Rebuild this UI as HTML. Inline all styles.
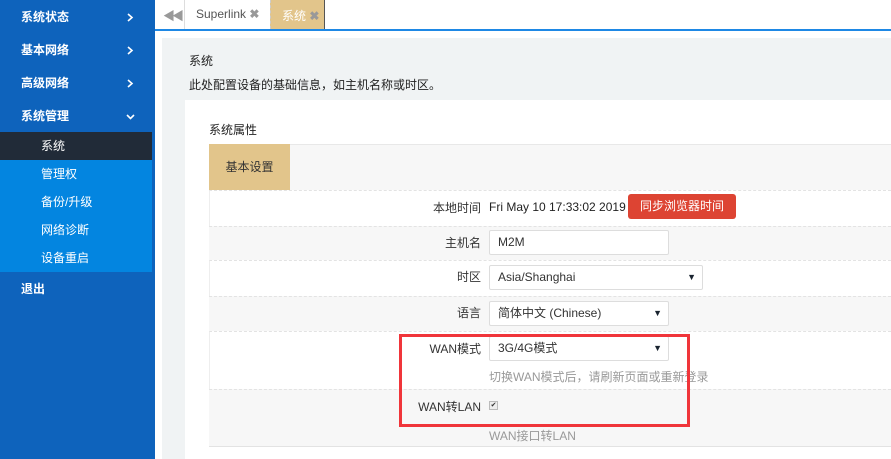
<!DOCTYPE html>
<html><head><meta charset="utf-8"><style>
*{margin:0;padding:0;box-sizing:border-box}
body{width:891px;height:459px;overflow:hidden;position:relative;font-family:"Liberation Sans","Noto Sans CJK SC",sans-serif;font-size:12px;color:#333;background:#fff}
.a{position:absolute}
.side{left:0;top:0;width:155px;height:459px;background:#0e63bc}
.m{left:21px;color:#fff;font-weight:bold;font-size:12px}
.arr{left:126px}
.sub{left:0;top:132px;width:152px;height:140px;background:#0385e0}
.si{left:0;width:152px;height:28px;line-height:28px;padding-left:41px;color:#fff;font-size:12px}
.row{left:209px;width:682px;border-top:1px dashed #e3e3e3}
.lbl{width:272px;text-align:right;font-size:12px;color:#333}
.inp{border:1px solid #ddd;border-radius:2px;background:#fff;height:25px;line-height:23px;padding-left:8px;font-size:12px;color:#333}
.tri{position:absolute;right:6px;top:0;font-size:9px;color:#1a2430}
</style></head><body>
<div class="a side"></div>
<div class="a m" style="top:8px">系统状态</div><svg class="a arr" style="top:13px" width="8" height="9"><path d="M2 1L6 4.5L2 8" stroke="#fff" stroke-width="1.6" fill="none"/></svg>
<div class="a m" style="top:41px">基本网络</div><svg class="a arr" style="top:46px" width="8" height="9"><path d="M2 1L6 4.5L2 8" stroke="#fff" stroke-width="1.6" fill="none"/></svg>
<div class="a m" style="top:74px">高级网络</div><svg class="a arr" style="top:79px" width="8" height="9"><path d="M2 1L6 4.5L2 8" stroke="#fff" stroke-width="1.6" fill="none"/></svg>
<div class="a m" style="top:107px">系统管理</div><svg class="a" style="left:126px;top:113px" width="9" height="7"><path d="M1 2L4.5 5.5L8 2" stroke="#fff" stroke-width="1.6" fill="none"/></svg>
<div class="a sub"></div>
<div class="a si" style="top:132px;background:#212b38">系统</div>
<div class="a si" style="top:160px">管理权</div>
<div class="a si" style="top:188px">备份/升级</div>
<div class="a si" style="top:216px">网络诊断</div>
<div class="a si" style="top:244px">设备重启</div>
<div class="a m" style="top:280px">退出</div>

<!-- tabs -->
<div class="a" style="left:155px;top:0;width:736px;height:29px;background:#fff"></div>
<div class="a" style="left:155px;top:29px;width:736px;height:2px;background:#1e88e5"></div>
<div class="a" style="left:163px;top:7px;color:#999;font-size:12px;letter-spacing:-3px">◀◀</div>
<div class="a" style="left:184px;top:0;width:1px;height:29px;background:#ddd"></div>
<div class="a" style="left:196px;top:7px;color:#555;font-size:12px">Superlink <span style="color:#999;font-weight:bold">✖</span></div>
<div class="a" style="left:270px;top:0;width:55px;height:29px;background:#e2c58b;border-left:1px dashed #ccc;border-right:1px solid #555"></div>
<div class="a" style="left:282px;top:7px;color:#fff;font-size:12px">系统 <span style="color:#999;font-weight:bold">✖</span></div>

<!-- content -->
<div class="a" style="left:162px;top:38px;width:729px;height:421px;background:#f0f3f4"></div>
<div class="a" style="left:189px;top:52px;font-size:12px;color:#222">系统</div>
<div class="a" style="left:189px;top:76px;font-size:12px;color:#222">此处配置设备的基础信息，如主机名称或时区。</div>
<div class="a" style="left:185px;top:100px;width:706px;height:359px;background:#fff"></div>
<div class="a" style="left:209px;top:121px;font-size:12px;color:#222">系统属性</div>
<div class="a" style="left:209px;top:144px;width:682px;height:46px;background:#f7f7f7;border-top:1px solid #e8e8e8"></div>
<div class="a" style="left:209px;top:144px;width:81px;height:46px;background:#e2c58b;line-height:46px;text-align:center;color:#333">基本设置</div>

<div class="a row" style="top:190px;height:36px;background:#fff;border-left:1px solid #eee"></div>
<div class="a row" style="top:226px;height:34px;background:#f7f7f7"></div>
<div class="a row" style="top:260px;height:36px;background:#fff;border-left:1px solid #eee"></div>
<div class="a row" style="top:296px;height:35px;background:#f7f7f7"></div>
<div class="a row" style="top:331px;height:58px;background:#fff;border-left:1px solid #eee"></div>
<div class="a row" style="top:389px;height:58px;background:#f7f7f7;border-bottom:1px solid #e3e3e3"></div>

<div class="a lbl" style="left:209px;top:199px">本地时间</div>
<div class="a" style="left:489px;top:200px;color:#222">Fri May 10 17:33:02 2019</div>
<div class="a" style="left:628px;top:194px;width:108px;height:25px;background:#dd4433;border-radius:3px;color:#fff;text-align:center;line-height:25px;font-size:12px">同步浏览器时间</div>

<div class="a lbl" style="left:209px;top:234px">主机名</div>
<div class="a inp" style="left:489px;top:230px;width:180px">M2M</div>

<div class="a lbl" style="left:209px;top:268px">时区</div>
<div class="a inp" style="left:489px;top:265px;width:214px">Asia/Shanghai<span class="tri">▼</span></div>

<div class="a lbl" style="left:209px;top:304px">语言</div>
<div class="a inp" style="left:489px;top:301px;width:180px">简体中文 (Chinese)<span class="tri">▼</span></div>

<div class="a lbl" style="left:209px;top:340px">WAN模式</div>
<div class="a inp" style="left:489px;top:336px;width:180px">3G/4G模式<span class="tri">▼</span></div>
<div class="a" style="left:489px;top:368px;color:#999">切换WAN模式后，请刷新页面或重新登录</div>

<div class="a lbl" style="left:209px;top:398px">WAN转LAN</div>
<div class="a" style="left:489px;top:401px;width:9px;height:9px;border:1px solid #bbb;background:#eee;font-size:7px;line-height:7px;text-align:center;color:#333">✔</div>
<div class="a" style="left:489px;top:427px;color:#999">WAN接口转LAN</div>

<div class="a" style="left:399px;top:334px;width:291px;height:93px;border:3px solid #f0353a"></div>
</body></html>
